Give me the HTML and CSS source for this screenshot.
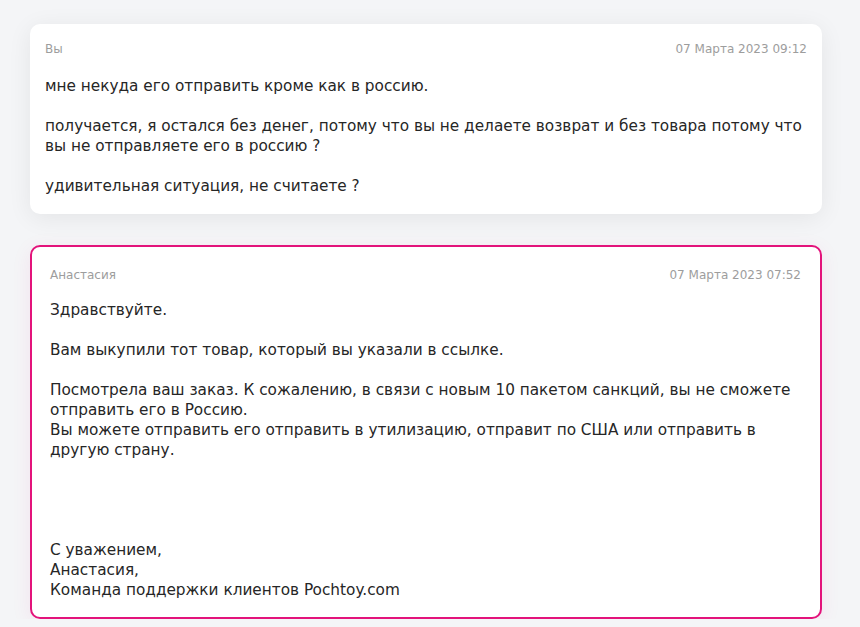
FILE: index.html
```html
<!DOCTYPE html>
<html lang="ru">
<head>
<meta charset="utf-8">
<link rel="stylesheet" href="styles.css">
</head>
<body>
<div class="thread">
  <div class="msg">
    <div class="meta"><span>Вы</span><span>07 Марта 2023 09:12</span></div>
    <div class="text">мне некуда его отправить кроме как в россию.

получается, я остался без денег, потому что вы не делаете возврат и без товара потому что вы не отправляете его в россию ?

удивительная ситуация, не считаете ?</div>
  </div>
  <div class="msg msg-support">
    <div class="meta"><span>Анастасия</span><span>07 Марта 2023 07:52</span></div>
    <div class="text">Здравствуйте.

Вам выкупили тот товар, который вы указали в ссылке.

Посмотрела ваш заказ. К сожалению, в связи с новым 10 пакетом санкций, вы не сможете отправить его в Россию.
Вы можете отправить его отправить в утилизацию, отправит по США или отправить в другую страну.




С уважением,
Анастасия,
Команда поддержки клиентов Pochtoy.com</div>
  </div>
</div>
</body>
</html>
```

FILE: styles.css
```css
html, body {
  margin: 0;
  padding: 0;
  background: #f4f5f7;
}
body {
  font-family: "DejaVu Sans", sans-serif;
  color: #262626;
}
.thread {
  display: flex;
  flex-direction: column;
  gap: 31px;
  padding: 24px 38px 0 30px;
}
.msg {
  background: #fff;
  border-radius: 10px;
  box-shadow: 0 4px 24px rgba(0, 0, 0, 0.07);
  padding: 16px 15px 18px 15px;
}
.msg-support {
  border: 2px solid #e3137b;
  padding: 19px 19px 17px 18px;
  box-shadow: 0 4px 20px rgba(227, 19, 123, 0.08);
}
.meta {
  display: flex;
  justify-content: space-between;
  font-size: 12px;
  line-height: 18px;
  color: #9d9d9d;
  margin-bottom: 18px;
}
.msg-support .meta {
  margin-bottom: 16px;
}
.text {
  white-space: pre-line;
  font-size: 15.3px;
  line-height: 20px;
}
```
